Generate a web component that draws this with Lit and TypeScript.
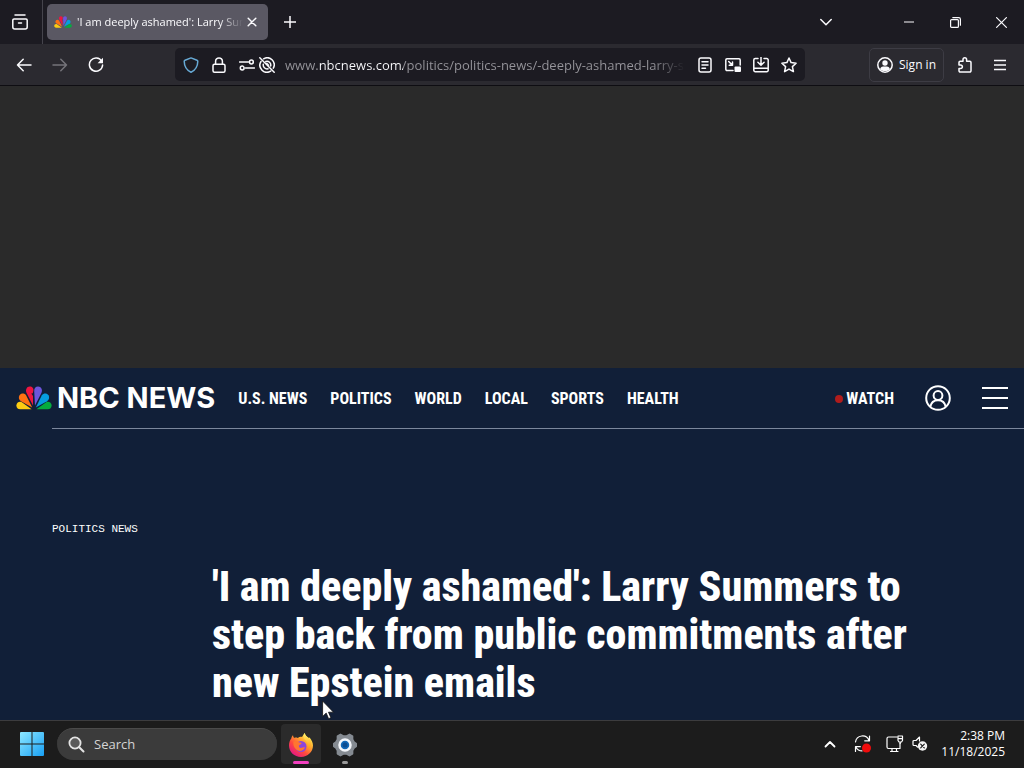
import { LitElement, html, css, svg, TemplateResult } from "lit";
import { customElement } from "lit/decorators.js";

const icon = (size: number, body: TemplateResult, cls = "") => html`
  <svg class="icon ${cls}" width=${size} height=${size} viewBox="0 0 ${size} ${size}" aria-hidden="true">${body}</svg>
`;

const icons = {
  view: icon(16, svg`<path d="M3 1h10M2 5h12a1.200 1.200 0 0 1 1.200 1.200V13a2 2 0 0 1-2 2H2.800a2 2 0 0 1-2-2V6.200A1.200 1.200 0 0 1 2 5zM6.500 9h3"/>`),
  close: icon(10, svg`<path d="M1.2 1.2l7.6 7.6M8.800 1.200l-7.600 7.600"/>`),
  plus: icon(12, svg`<path d="M6 0v12M0 6h12"/>`),
  down: icon(12, svg`<path d="M.8 3.500L6 8.700l5.200-5.200"/>`),
  minimize: icon(10, svg`<path d="M0 5h10"/>`, "thin"),
  restore: icon(11, svg`<rect x=".6" y="2.600" width="7.800" height="7.800" rx="1"/><path d="M2.800.6h6a1.600 1.600 0 0 1 1.600 1.600v6"/>`, "thin"),
  exit: icon(11, svg`<path d="M.6.600l9.800 9.800M10.400.6L.6 10.400"/>`, "thin"),
  back: icon(16, svg`<path d="M15 8H1.500M7.200 2.300L1.500 8l5.700 5.700"/>`),
  forward: icon(16, svg`<path d="M1 8h13.500M8.800 2.300L14.500 8l-5.700 5.700"/>`),
  reload: icon(16, svg`<path d="M13.700 4.300A6.600 6.600 0 1 0 14.600 8"/><path class="solid" d="M15 .800V6.200H9.600z"/>`),
  shield: icon(16, svg`<path d="M8 .9L14 3.200c.5.200.8.600.8 1.100-.1 5-2.200 8.800-6.800 11C3.400 13.100 1.300 9.300 1.200 4.300c0-.5.300-.9.800-1.100z"/>`),
  lock: icon(16, svg`<rect x="2" y="7.200" width="12" height="8" rx="1.500"/><path d="M4.600 7V4.300a3.400 3.400 0 0 1 6.800 0V7"/>`),
  permissions: icon(16, svg`<path d="M.5 5h9M6.500 11h9"/><circle cx="12.400" cy="5" r="1.900"/><circle cx="3.200" cy="11" r="1.900"/>`),
  blocked: icon(16, svg`<path d="M.8.8l14.400 14.400M4.600 1.800a7 7 0 0 1 9.700 9.400M2 4.500a7 7 0 0 0 9.700 9.600M6.800 4.500a3.800 3.800 0 0 1 4.900 4.400M4.300 7.200a3.900 3.900 0 0 0 4.700 4.600"/><path class="solid" d="M8 5.600l2.500 2.700-.9.900-3-3z"/>`),
  reader: icon(16, svg`<rect x="2" y="1" width="12" height="14" rx="2"/><path d="M5 4.700h6M5 8h6M5 11.300h3.500"/>`),
  pip: icon(16, svg`<path d="M8 13.500H2A1.200 1.200 0 0 1 .8 12.300V2.900a1.200 1.200 0 0 1 1.200-1.200h12a1.200 1.200 0 0 1 1.200 1.200V8M3.700 4.500l3.600 3.600M7.500 5v3.300H4.200"/><rect class="solid" x="9.500" y="9.500" width="6.500" height="5.500" rx="1"/>`),
  save: icon(16, svg`<path d="M5 1.500H2.200A1.400 1.400 0 0 0 .8 2.900v10.400a1.400 1.400 0 0 0 1.400 1.400h11.600a1.400 1.400 0 0 0 1.400-1.400V2.900a1.400 1.400 0 0 0-1.400-1.400H11M8 0v8M4.900 5.200L8 8.300l3.100-3.100M1 11.300h14"/>`),
  star: icon(16, svg`<path d="M8 1l2.100 4.600 5 .6-3.700 3.400 1 5L8 12.100l-4.400 2.500 1-5L.9 6.200l5-.6z"/>`),
  account: icon(16, svg`<circle cx="8" cy="8" r="7.200"/><circle class="solid" cx="8" cy="6" r="2.700"/><path class="solid" d="M3 12.200c.6-2 2-2.700 3-2.700h4c1 0 2.400.7 3 2.700-1.400 1.300-3 1.900-5 1.900s-3.600-.6-5-1.900z"/>`),
  extension: icon(16, svg`<path d="M6 4.300V2.600a1.800 1.800 0 0 1 3.600 0v1.700h3.200a1.200 1.200 0 0 1 1.200 1.200v8.300a1.200 1.200 0 0 1-1.200 1.200H3.200A1.200 1.200 0 0 1 2 13.800V11.500h1.700a1.700 1.700 0 0 0 0-3.400H2V5.500a1.200 1.200 0 0 1 1.200-1.200z"/>`),
  menu: icon(12, svg`<path d="M0 1.500h12M0 6h12M0 10.500h12"/>`),
};

const peacock = (width: number, height: number) => html`
  <svg width=${width} height=${height} viewBox="0 0 36 24" aria-hidden="true">
    <path fill="#fccc12" d="M15.600 23.300H4.200C1.800 23.300.4 21.700.4 19.600c0-2.800 2.900-4.700 5.500-3.300z" />
    <path fill="#ff7112" d="M16.200 21.600L5 15.200C2.700 13.800 2.300 11.200 3.500 9.300c1.500-2.400 5.100-2.600 6.700.1z" />
    <path fill="#ef1541" d="M17 19.400L10.700 7.200C9 3.900 10.700 .6 13.700.5c2.500-.1 4.200 1.900 3.700 4.300l-.6 2.400-1.500.2 1.700 2.500z" />
    <path fill="#6e55dc" d="M19 19.400L18.200 5.200C18 2.300 19.600.5 22.100.5c3 0 4.900 3.200 3.300 6.500z" />
    <path fill="#069de0" d="M19.800 21.600l6.100-12.300c1.600-2.500 5-2.500 6.600 0 1.200 2 .7 4.700-1.500 6z" />
    <path fill="#05ac3f" d="M20.400 23.300l9.700-7c2.600-1.400 5.500.5 5.500 3.300 0 2.100-1.400 3.700-3.800 3.700z" />
  </svg>
`;

@customElement("browser-chrome")
export class BrowserChrome extends LitElement {
  static styles = css`
    :host { display: block; color: #fbfbfe; font: 12px/16px "Open Sans", "Noto Sans", sans-serif; }
    button { display: inline-flex; align-items: center; justify-content: center; border: 0; padding: 0; background: none; color: inherit; font: inherit; }
    .icon { flex: none; fill: none; stroke: currentColor; stroke-width: 1.5; stroke-linecap: round; stroke-linejoin: round; }
    .thin { stroke-width: 1.2; }
    .solid { fill: currentColor; stroke: none; }
    .tabs { display: flex; align-items: center; height: 44px; background: #1c1b22; }
    .view { align-self: stretch; width: 43px; padding-right: 2px; border-right: 1px solid #45444c; box-sizing: border-box; }
    .tab { display: flex; align-items: center; width: 221px; height: 36px; margin-left: 4px; padding: 0 11px 0 7px; box-sizing: border-box; border-radius: 5px; background: #5a5863; }
    .title { flex: 1; min-width: 0; margin: 0 4px 0 5px; overflow: hidden; white-space: nowrap; font-size: 11px; mask-image: linear-gradient(to left, transparent, #000 24px); }
    .new { width: 32px; height: 32px; margin-left: 6px; }
    .window { display: flex; margin-left: auto; }
    .window button { width: 46px; height: 44px; }
    .window .list { margin-right: 37px; }
    .bar { display: flex; align-items: center; height: 42px; padding: 0 8px; box-sizing: border-box; background: #2b2a30; border-bottom: 1px solid #0e0d12; }
    .nav { width: 32px; height: 32px; margin-right: 4px; }
    .nav[disabled] { color: #75747a; }
    .address { display: flex; flex: 1; min-width: 0; align-items: center; height: 33px; margin: 0 64px 0 59px; padding: 0 8px; box-sizing: border-box; border-radius: 5px; background: #1c1b22; }
    .shield { color: #67a9d4; }
    .address button { flex: none; width: 16px; height: 24px; }
    .lock { margin-left: 12px; }
    .permissions { margin-left: 12px; }
    .blocked { margin-left: 4px; }
    .url { flex: 1; min-width: 0; height: 24px; margin: 0 12px 0 10px; padding: 0; border: 0; outline: 0; font: 13px/24px "Open Sans", "Noto Sans", sans-serif; color: transparent; background: linear-gradient(90deg, #96959b 33px, #fbfbfe 33px, #fbfbfe 118px, #96959b 118px) text; -webkit-background-clip: text; mask-image: linear-gradient(to left, transparent, #000 32px); }
    .actions { display: flex; gap: 12px; }
    .signin { gap: 6px; height: 34px; padding: 0 7px; border: 1px solid #3d3c44; border-radius: 5px; }
    .tool { width: 16px; height: 32px; margin-left: 13px; }
    .menu { margin-left: 19px; margin-right: 8px; }
  `;

  render() {
    return html`
      <div class="tabs">
        <button class="view" aria-label="Firefox View">${icons.view}</button>
        <div class="tab">
          ${peacock(18, 12)}
          <span class="title">'I am deeply ashamed': Larry Summers</span>
          <button aria-label="Close tab">${icons.close}</button>
        </div>
        <button class="new" aria-label="New tab">${icons.plus}</button>
        <div class="window">
          <button class="list" aria-label="List all tabs">${icons.down}</button>
          <button aria-label="Minimize">${icons.minimize}</button>
          <button aria-label="Restore">${icons.restore}</button>
          <button aria-label="Close">${icons.exit}</button>
        </div>
      </div>
      <div class="bar">
        <button class="nav" aria-label="Back">${icons.back}</button>
        <button class="nav" aria-label="Forward" disabled>${icons.forward}</button>
        <button class="nav" aria-label="Reload">${icons.reload}</button>
        <div class="address">
          <button class="shield" aria-label="Tracking protection">${icons.shield}</button>
          <button class="lock" aria-label="Site information">${icons.lock}</button>
          <button class="permissions" aria-label="Permissions">${icons.permissions}</button>
          <button class="blocked" aria-label="Autoplay blocked">${icons.blocked}</button>
          <input class="url" aria-label="Address" spellcheck="false" .value=${"www.nbcnews.com/politics/politics-news/-deeply-ashamed-larry-summers"} />
          <div class="actions">
            <button aria-label="Reader view">${icons.reader}</button>
            <button aria-label="Picture in picture">${icons.pip}</button>
            <button aria-label="Save">${icons.save}</button>
            <button aria-label="Bookmark">${icons.star}</button>
          </div>
        </div>
        <button class="signin">${icons.account}<span>Sign in</span></button>
        <button class="tool" aria-label="Extensions">${icons.extension}</button>
        <button class="tool menu" aria-label="Menu">${icons.menu}</button>
      </div>
    `;
  }
}

@customElement("news-page")
export class NewsPage extends LitElement {
  static styles = css`
    :host { display: flex; flex-direction: column; min-height: 0; overflow: hidden; color: #fff; background: #111f38; font-family: "Roboto Condensed", "Roboto", sans-serif; }
    .ad { flex: none; height: 282px; background: #2a2a2a; }
    .head { display: flex; flex: none; align-items: center; height: 60px; padding: 0 16px; }
    a { color: inherit; text-decoration: none; }
    .logo { display: flex; align-items: center; gap: 5px; font: 700 29px/36px "Inter", sans-serif; white-space: nowrap; }
    nav { display: flex; gap: 23px; margin-left: 23px; }
    nav a, .watch { padding-top: 2px; font-size: 16px; line-height: 20px; font-weight: 700; white-space: nowrap; }
    .watch { display: flex; align-items: center; gap: 3px; margin-left: auto; }
    .dot { width: 8px; height: 8px; border-radius: 50%; background: #b01c1c; }
    button { display: flex; border: 0; padding: 0; background: none; color: inherit; }
    .user { margin-left: 31px; }
    .burger { margin-left: 31px; }
    svg.line { fill: none; stroke: currentColor; stroke-width: 2; }
    article { margin-left: 52px; padding-top: 92px; border-top: 1px solid #7c879c; }
    .section { display: block; font: 11px/16px "Liberation Mono", monospace; }
    h1 { max-width: 720px; margin: 26px 0 0 160px; font-size: 42px; line-height: 48px; font-weight: 800; }
  `;

  links = ["U.S. NEWS", "POLITICS", "WORLD", "LOCAL", "SPORTS", "HEALTH"];

  render() {
    return html`
      <div class="ad"></div>
      <header class="head">
        <a class="logo" href="#">${peacock(36, 24)}<span>NBC NEWS</span></a>
        <nav>${this.links.map((l) => html`<a href="#">${l}</a>`)}</nav>
        <a class="watch" href="#"><span class="dot"></span>WATCH</a>
        <button class="user" aria-label="Account">
          <svg class="line" width="26" height="26" viewBox="0 0 26 26"><circle cx="13" cy="13" r="11.800"/><circle cx="13" cy="10.500" r="4.400"/><path d="M5.300 21.800c.8-4.300 3.700-6.600 7.700-6.600s6.900 2.300 7.700 6.600"/></svg>
        </button>
        <button class="burger" aria-label="Menu">
          <svg class="line" width="26" height="22" viewBox="0 0 26 22"><path d="M0 1h26M0 11h26M0 21h26"/></svg>
        </button>
      </header>
      <article>
        <a class="section" href="#">POLITICS NEWS</a>
        <h1>'I am deeply ashamed': Larry Summers to step back from public commitments after new Epstein emails</h1>
      </article>
    `;
  }
}

@customElement("task-bar")
export class TaskBar extends LitElement {
  static styles = css`
    :host { display: flex; align-items: center; height: 48px; padding: 0 19px 2px; box-sizing: border-box; color: #fff; background: #1c1c1c; border-top: 1px solid #3c3c3e; font: 12px/16px "Open Sans", "Noto Sans", sans-serif; }
    button { display: flex; flex: none; align-items: center; justify-content: center; border: 0; padding: 0; background: none; color: inherit; }
    .start { width: 26px; height: 40px; }
    .search { display: flex; align-items: center; gap: 9px; width: 220px; height: 32px; margin-left: 12px; padding: 0 11px; box-sizing: border-box; border-radius: 16px; background: #3b3b3b; border-top: 1px solid #4b4b4b; }
    .search input { flex: 1; min-width: 0; padding: 0; border: 0; outline: 0; background: none; color: #fff; font: 13px/20px "Open Sans", "Noto Sans", sans-serif; }
    .search input::placeholder { color: #d4d4d4; opacity: 1; }
    .app { flex-direction: column; justify-content: flex-end; gap: 4px; width: 40px; height: 40px; margin-left: 4px; border-radius: 4px; }
    .app.active { background: #2b2b2b; }
    .mark { width: 6px; height: 3px; border-radius: 2px; background: #9a9a9a; }
    .active .mark { width: 16px; background: #f23fc0; }
    .tray { display: flex; align-items: center; margin-left: auto; }
    .line { fill: none; stroke: currentColor; stroke-width: 1.2; stroke-linecap: round; stroke-linejoin: round; }
    .up { margin-right: 18px; }
    .sync { margin-right: 14px; }
    .net { margin-right: 8px; }
    .clock { margin-left: 13px; text-align: right; }
  `;

  render() {
    return html`
      <button class="start" aria-label="Start">
        <svg width="24" height="24" viewBox="0 0 24 24">
          <defs><linearGradient id="w" x1="0" y1="0" x2="24" y2="24" gradientUnits="userSpaceOnUse"><stop stop-color="#8de8ff"/><stop offset="1" stop-color="#18a0f5"/></linearGradient></defs>
          <path fill="url(#w)" d="M1 0h10.500v11.500H0V1a1 1 0 0 1 1-1zM12.500 0H23a1 1 0 0 1 1 1v10.500H12.500zM0 12.500h11.500V24H1a1 1 0 0 1-1-1zM12.500 12.500H24V23a1 1 0 0 1-1 1H12.500z"/>
        </svg>
      </button>
      <label class="search">
        <svg width="17" height="17" viewBox="0 0 17 17"><circle cx="7" cy="7" r="5.600" fill="#5a5a5a" stroke="#e4e4e4" stroke-width="1.800"/><path d="M11.200 11.200l4.300 4.300" stroke="#e4e4e4" stroke-width="2" stroke-linecap="round"/></svg>
        <input type="text" placeholder="Search" aria-label="Search" />
      </label>
      <button class="app active" aria-label="Firefox">
        <svg width="24" height="24" viewBox="0 0 24 24">
          <defs>
            <linearGradient id="f" x1="20" y1="2" x2="4" y2="22" gradientUnits="userSpaceOnUse"><stop stop-color="#fff44f"/><stop offset=".35" stop-color="#ffa02e"/><stop offset=".65" stop-color="#ff4a3d"/><stop offset="1" stop-color="#e31587"/></linearGradient>
            <linearGradient id="y" x1="0" y1="0" x2="0" y2="1"><stop stop-color="#fff36e"/><stop offset="1" stop-color="#ff980e"/></linearGradient>
          </defs>
          <path fill="url(#f)" d="M2.400 5.200C2.500 3.600 3.300 2.900 4 2.200c.1 1.200.5 2 1.100 2.700 1-.5 2.500-.5 3.700.1C10.200 4 11.500 3.300 13 4 14 2.700 14.600 1.200 15.600 0c.5 2.400 2.500 3.600 4.100 5.100l.9-.6C22.700 7 24 9.800 24 12.600 24 19 18.600 24 12 24S0 19 0 12.500C0 9.600.9 7 2.400 5.200z"/>
          <circle cx="12" cy="13.500" r="5.500" fill="#8b45dc"/>
          <path fill="#ff7630" d="M4.500 8.500c2.200-1.200 4.500-.3 5.200.7 1.300.2 2.700.3 2.900 1-.3 1-2.200 1.300-2.700 2.300-.3 1.600.8 2.800 2.700 2.300 1.300-.4 2-.8 3.400-.2-1.400 3-4.800 4.300-7.700 2.600C5.200 15.500 3.800 12 4.500 8.500z"/>
          <path fill="url(#y)" d="M15.600 0c-2.200 3.500-.8 5.600 1.200 7.600 2.400 2.500 3.500 5 2.400 8.300 2.700-2 3.100-5.500 2-9l-1.500-1.800C18.100 3.600 16.100 2.400 15.600 0z"/>
        </svg>
        <span class="mark"></span>
      </button>
      <button class="app" aria-label="Settings">
        <svg width="24" height="24" viewBox="0 0 24 24">
          <path fill="#858b92" stroke="#858b92" stroke-width="1.500" stroke-linejoin="round" d="M7.500 1.300l2.800 1.600h3.400l2.800-1.600 3.100 1.900v3.300l1.600 2.700 2.100 1.500v2.600l-2.100 1.500-1.600 2.700v3.300l-3.100 1.900-2.800-1.600h-3.400l-2.800 1.600-3.100-1.900v-3.300l-1.600-2.700-2.100-1.500v-2.600l2.100-1.500 1.600-2.700V3.200z"/>
          <circle cx="12" cy="12" r="5.500" fill="#1269b8" stroke="#f3f6fa" stroke-width="2.500"/>
          <circle cx="12" cy="12" r="2.500" fill="#0b4c91"/>
        </svg>
        <span class="mark"></span>
      </button>
      <div class="tray">
        <button class="up" aria-label="Hidden icons"><svg class="line" width="12" height="8" viewBox="0 0 12 8"><path stroke-width="1.800" d="M1.500 6.500L6 2l4.500 4.500"/></svg></button>
        <button class="sync" aria-label="Update"><svg class="line" width="18" height="18" viewBox="0 0 18 18"><path d="M1.500 7A7 7 0 0 1 15 5.500M15.500 1v4.800h-4.800M1.500 16.500v-4.800h4.800M2 12.200a7 7 0 0 0 6 3.700"/><circle cx="12.500" cy="13" r="4.500" fill="#f00c0c" stroke="none"/></svg></button>
        <button class="net" aria-label="Network"><svg class="line" width="18" height="18" viewBox="0 0 18 18"><path d="M11 2H2.500A1.500 1.500 0 0 0 1 3.500V12a1.500 1.500 0 0 0 1.500 1.500H14V8M4.500 16.500H12M6 13.500v3M10.500 13.500v3"/><path d="M12 1h4.500v4.500L15.500 7h-2.500L12 5.500zM12 3.700h4.500M14.200 7v1.500"/></svg></button>
        <button aria-label="Volume muted"><svg class="line" width="16" height="16" viewBox="0 0 16 16"><path d="M7.500 5V1L4 4.500H2A1 1 0 0 0 1 5.500v3a1 1 0 0 0 1 1h2l1.500 1.500"/><circle cx="10.500" cy="10" r="4.700" fill="#f4f4f4" stroke="none"/><path stroke="#1c1c1c" d="M8.700 8.200l3.600 3.600M12.300 8.200l-3.600 3.600"/></svg></button>
        <div class="clock">2:38 PM<br />11/18/2025</div>
      </div>
    `;
  }
}

@customElement("app-root")
export class AppRoot extends LitElement {
  static styles = css`
    :host { display: flex; flex-direction: column; height: 100vh; position: relative; overflow: hidden; }
    news-page { flex: 1; }
    .pointer { position: absolute; left: 322px; top: 700px; }
  `;

  render() {
    return html`
      <browser-chrome></browser-chrome>
      <news-page></news-page>
      <task-bar></task-bar>
      <svg class="pointer" width="13" height="20" viewBox="0 0 13 20" aria-hidden="true">
        <path fill="#fff" stroke="#111" stroke-width=".8" d="M.6 1v15.500l3.600-3.400 2.400 5.600 2.300-1-2.400-5.500h5z" />
      </svg>
    `;
  }
}
